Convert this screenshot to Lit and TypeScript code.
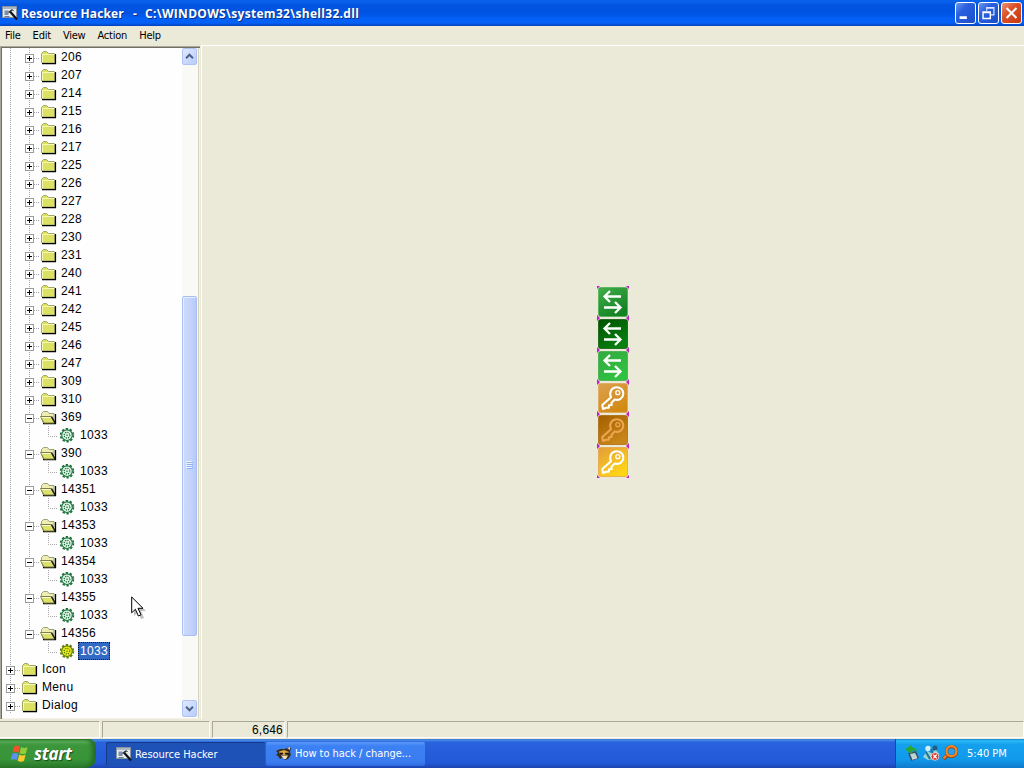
import { LitElement, css, html, svg } from 'lit'
import { customElement, property } from 'lit/decorators.js'
import { classMap } from 'lit/directives/class-map.js'
import { when } from 'lit/directives/when.js'

type Row = { label: string; depth: number; open?: boolean; selected?: boolean; last?: boolean }

const closed = [
  '206', '207', '214', '215', '216', '217', '225', '226', '227', '228',
  '230', '231', '240', '241', '242', '245', '246', '247', '309', '310',
]
const opened = ['369', '390', '14351', '14353', '14354', '14355', '14356']

const rows: Row[] = [
  ...closed.map(label => ({ label, depth: 1 })),
  ...opened.flatMap(label => [
    { label, depth: 1, open: true, last: label === '14356' },
    { label: '1033', depth: 2, selected: label === '14356', last: label === '14356' },
  ]),
  ...['Icon', 'Menu', 'Dialog'].map(label => ({ label, depth: 0 })),
]

const appIcon = html`
  <svg width="16" height="16" viewBox="0 0 16 16">
    <path d="M.5 1.500h14v11H.5z" fill="#e6ebee" stroke="#8a949c" />
    <path d="M1 2h13v2H1z" fill="#aab8c8" />
    <path d="M2.500 5.500h4v4.500h-4z" fill="#7890b0" />
    <path d="M8 5.500h4M2.500 11.500h5" stroke="#6c7c90" />
    <path d="M8 6.500l7 8" stroke="#111" stroke-width="2.200" />
    <path d="M6.500 7.500l4-3" stroke="#333" stroke-width="1.500" />
  </svg>
`

@customElement('tree-row')
export class TreeRow extends LitElement {

  @property({ type: Object })
  row: Row = { label: '', depth: 0 }

  private line(d: string) {
    return svg`<path d=${d} stroke="#a5a5a5" stroke-dasharray="1 1" fill="none" />`
  }

  private expander() {
    const { open, last } = this.row
    return html`
      <svg class="cell" viewBox="0 0 19 18">
        ${this.line(`M9.500 0V${last ? 9 : 18}`)}
        ${this.line('M14 10.500H19')}
        <rect x="5.500" y="6.500" width="8" height="8" fill="#fff" stroke="#9a9a9a" />
        <path d="M7 10.500H12" stroke="#000" />
        ${open ? null : svg`<path d="M9.500 8V13" stroke="#000" />`}
      </svg>
    `
  }

  private folder() {
    return html`
      <svg class="cell" viewBox="0 0 19 18">
        ${this.row.open
          ? svg`
            <path d="M2.500 9V5.500l2-2h4l1.500 2h5v9H4z" fill="#eceeb4" stroke="#a0a178" />
            <path d="M16.500 6v10M4 15.700h13" stroke="#000" stroke-width="1.300" />
            <path d="M1.500 8.500h10.500l3.500 6.500H5z" fill="#dce16a" stroke="#808044" />
            <path d="M2.500 9.500h9" stroke="#fbfce0" />
            <path d="M12.500 8.500l3.700 6.500" stroke="#111" stroke-width="1.300" />`
          : svg`
            <path d="M2.500 14.500V5.500l2-2h3l2 2h6v9.500H3z" fill="#dbe163" stroke="#a3a468" />
            <path d="M3.500 14V6.500h12" stroke="#f6f8bc" fill="none" />
            <path d="M16.500 6v10M3 15.600h14" stroke="#000" stroke-width="1.200" fill="none" />`}
      </svg>
    `
  }

  private gear() {
    const fill = this.row.selected ? '#e8ee18' : '#e4f5e8'
    const ink = this.row.selected ? '#5f7a08' : '#177038'
    return html`
      <svg class="cell" viewBox="0 0 19 18">
        <circle cx="9" cy="9.200" r="5.700" fill=${fill} />
        <circle cx="9" cy="9.200" r="6.400" fill="none" stroke=${ink} stroke-width="1.700" stroke-dasharray="2.300 1.721" />
        <circle cx="9" cy="9.200" r="5.300" fill="none" stroke=${ink} stroke-width="1.100" />
        <circle cx="9" cy="9.200" r="2.800" fill="none" stroke=${ink} stroke-width="1.300" stroke-dasharray="1.200 1" />
        <circle cx="9" cy="9.200" r=".8" fill=${ink} />
      </svg>
    `
  }

  render() {
    const { label, depth, selected, last } = this.row
    return html`
      ${when(depth > 0, () => html`<svg class="cell" viewBox="0 0 19 18">${this.line('M9.500 0V18')}</svg>`)}
      ${when(depth === 2, () => html`
        <svg class="cell" viewBox="0 0 19 18">${last ? null : this.line('M9.500 0V18')}</svg>
        <svg class="cell" viewBox="0 0 19 18">${this.line('M9.500 0V10.500H19')}</svg>
        ${this.gear()}
      `)}
      ${when(depth < 2, () => html`${this.expander()}${this.folder()}`)}
      <span class=${classMap({ label: true, selected: !!selected })}>${label}</span>
    `
  }

  static styles = css`
    :host {
      display: flex;
      height: 18px;
    }
    .cell {
      width: 19px;
      height: 18px;
      flex: none;
    }
    .label {
      box-sizing: border-box;
      margin-left: 1px;
      padding: 0 1px 0 2px;
      font: 12px/18px "Liberation Sans", sans-serif;
      letter-spacing: 0.35px;
      color: #000;
    }
    .selected {
      padding: 0 1px;
      line-height: 16px;
      color: #fff;
      background: #316ac5;
      border: 1px dotted #101828;
    }
  `
}

const strip = [
  { kind: 'arrows', ink: '#fff', from: '#42ae4a', to: '#128221' },
  { kind: 'arrows', ink: '#fff', from: '#005200', to: '#088010' },
  { kind: 'arrows', ink: '#fff', from: '#34a840', to: '#2fc240' },
  { kind: 'key', ink: '#fff', from: '#dda150', to: '#d18a12' },
  { kind: 'key', ink: '#eda552', from: '#a35f00', to: '#c98618' },
  { kind: 'key', ink: '#fff', from: '#e39c3c', to: '#ffd515' },
]

@customElement('bitmap-strip')
export class BitmapStrip extends LitElement {

  private glyph(kind: string, ink: string) {
    if (kind === 'arrows') {
      return svg`<path d="M24 10.500H8M13 5l-5.500 5.500L13 16M7 21.500h16M18 16l5.500 5.500L18 27" fill="none" stroke=${ink} stroke-width="2.300" />`
    }
    return svg`
      <path d="M14 15.200C11.800 10 14.800 5.200 19.500 5.200c4.500 0 7 3.300 6.800 6.800-.3 4.200-4.200 6.800-8.600 5.600l-3.200 3.200.2 2.200-2.700.3-.2 2.300-2.600.2-3.200 1.200-.7-4z" fill="none" stroke=${ink} stroke-width="2.100" stroke-linejoin="round" />
      <circle cx="20.800" cy="10.700" r="2" fill="none" stroke=${ink} stroke-width="1.300" />
    `
  }

  render() {
    return strip.map(({ kind, ink, from, to }, i) => html`
      <svg class="tile" viewBox="0 0 32 32">
        <linearGradient id=${`g${i}`} x1="0" y1="0" x2="0.600" y2="1">
          <stop offset="0" stop-color=${from} />
          <stop offset="1" stop-color=${to} />
        </linearGradient>
        <rect x="1" y="1" width="30" height="30" rx="2.500" fill="#f7f5e6" />
        <path d="M0 0h3L0 3zM32 0v3L29 0zM0 32v-3L3 32zM32 32h-3l3-3z" fill="#c01fc4" />
        <rect x="1.500" y="1.500" width="29" height="29" rx="2" fill=${`url(#g${i})`} stroke=${from} stroke-opacity="0.700" />
        ${this.glyph(kind, ink)}
      </svg>
    `)
  }

  static styles = css`
    :host {
      display: flex;
      flex-direction: column;
    }
    .tile {
      display: block;
      width: 32px;
      height: 32px;
    }
  `
}

@customElement('app-root')
export class AppRoot extends LitElement {

  render() {
    return html`
      <header class="title">
        ${appIcon}
        <span class="name">Resource Hacker</span>
        <span class="dash">-</span>
        <span class="path">C:\\WINDOWS\\system32\\shell32.dll</span>
        <div class="buttons">
          <svg class="min" viewBox="0 0 21 21"><path d="M4 15.500h8" stroke="#fff" stroke-width="3" /></svg>
          <svg class="max" viewBox="0 0 21 21">
            <path d="M8.500 8V4.500h8v8H13M8 5.200h9" fill="none" stroke="#dbe6ff" stroke-width="1.300" />
            <path d="M4.500 9.500h8v7h-8zM4 10h9" fill="none" stroke="#fff" stroke-width="1.600" />
          </svg>
          <svg class="close" viewBox="0 0 21 21"><path d="M5 5l11 11M16 5L5 16" stroke="#fff" stroke-width="2.300" /></svg>
        </div>
      </header>
      <nav class="menu">
        <span>File</span><span>Edit</span><span>View</span><span>Action</span><span>Help</span>
      </nav>
      <main>
        <section class="tree">
          <div class="rows">${rows.map(row => html`<tree-row .row=${row}></tree-row>`)}</div>
          <div class="scroll">
            <svg class="arrow" viewBox="0 0 15 17"><path d="M3.500 10.500l4-4 4 4" fill="none" stroke="#4d6185" stroke-width="2.300" /></svg>
            <div class="thumb"><i></i><i></i><i></i><i></i></div>
            <svg class="arrow down" viewBox="0 0 15 17"><path d="M3.500 6.500l4 4 4-4" fill="none" stroke="#4d6185" stroke-width="2.300" /></svg>
          </div>
        </section>
        <section class="canvas"><bitmap-strip></bitmap-strip></section>
      </main>
      <div class="status">
        <div class="panel p1"></div><div class="panel p2"></div>
        <div class="panel p3">6,646</div><div class="panel p4"></div>
      </div>
      <footer class="taskbar">
        <div class="start">
          <svg width="20" height="19" viewBox="0 0 20 19">
            <path d="M4 2.500c2-1.500 4-1.300 6 0L8.500 8.700c-2-1.200-4-1.200-6 0z" fill="#ee5426" />
            <path d="M11 3c2 1.200 4.300 1.200 6.500 0L16 9.200c-2.200 1.200-4.300 1.200-6.500 0z" fill="#8fce3b" />
            <path d="M2.200 10c2-1.300 4-1.200 6 0l-1.500 6.200c-2-1.200-4-1.200-6 0z" fill="#5b93f0" />
            <path d="M9.200 10.600c2 1.200 4.200 1.200 6.400 0l-1.500 6.200c-2.200 1.200-4.400 1.200-6.400 0z" fill="#fbca2c" />
          </svg>
          <span>start</span>
        </div>
        <div class="task active">${appIcon}<span>Resource Hacker</span></div>
        <div class="task">
          <svg width="16" height="16" viewBox="0 0 16 16">
            <path d="M0 5l4-2 5 0 4-2 2 1-1 4 1 3-3 4-3 1-2-3-3 2-2-3-2-1 2-2z" fill="#352e20" />
            <path d="M3 5.500l5-1.500 5 2-1 2-4 1-4-1z" fill="#d9a843" />
            <path d="M5 9.500h7l-2 3.500H8z" fill="#f3ddb0" />
            <path d="M4 7.500h3M9 7.500h4" stroke="#111" stroke-width="1.500" />
            <path d="M11 2l3-1v3z" fill="#d8d4c8" />
          </svg>
          <span>How to hack / change...</span>
        </div>
        <div class="tray">
          <svg width="16" height="16" viewBox="0 0 16 16">
            <path d="M3 8l8-2 3 7-8 3z" fill="#3a5368" />
            <path d="M5 9l5-1 2 4-5 1.500z" fill="#b9d5d5" />
            <path d="M7 14l5-1.500" stroke="#d7dfe0" stroke-width="1.500" />
            <path d="M0 4.500L6 0l1 2.500c3 0 5 1.500 5 4-2-1.500-4-1-5-.5l.7 3z" fill="#2aa82d" />
          </svg>
          <svg width="17" height="16" viewBox="0 0 17 16">
            <circle cx="5" cy="3.500" r="2.700" fill="#d5eff0" />
            <circle cx="12" cy="3" r="2.500" fill="#255c80" />
            <path d="M0 12l4-6 4 2 5-3 3 4-5 5-6 1z" fill="#9bd4d0" />
            <path d="M3 7l4 7M8 4l2 5" stroke="#267394" stroke-width="2" />
            <circle cx="12" cy="11.500" r="3.800" fill="#d92c20" stroke="#fff0e8" stroke-width=".7" />
            <path d="M10.300 9.800l3.400 3.400M13.700 9.800l-3.400 3.400" stroke="#fff" stroke-width="1.300" />
          </svg>
          <svg width="17" height="16" viewBox="0 0 17 16">
            <path d="M6 9.500L1.500 14" stroke="#8d3c0c" stroke-width="3.800" />
            <path d="M6 9L1.500 13.500" stroke="#f38227" stroke-width="2.300" />
            <circle cx="9.500" cy="6.500" r="5" fill="#22a2ef" stroke="#9a4312" stroke-width="3.300" />
            <circle cx="9.500" cy="6.200" r="5" fill="none" stroke="#f58a2a" stroke-width="2.200" />
          </svg>
          <span class="clock">5:40 PM</span>
        </div>
      </footer>
      <svg class="cursor" viewBox="0 0 16 24">
        <path d="M3 3v17l4-4 3 7 3-1-3-7h5z" fill="#000" opacity=".25" />
        <path d="M.7 1v15.800l3.700-3.500 3 6.700 2.600-1.200-3-6.500h5z" fill="#fff" stroke="#000" />
      </svg>
    `
  }

  static styles = css`
    :host {
      display: flex;
      flex-direction: column;
      position: relative;
      width: 1024px;
      height: 768px;
      overflow: hidden;
      background: #ebe9d8;
      font: 11px "DejaVu Sans Condensed", "DejaVu Sans", sans-serif;
      font-stretch: condensed;
      color: #000;
    }
    svg {
      display: block;
      flex: none;
    }
    span {
      white-space: nowrap;
    }

    .title {
      display: flex;
      align-items: center;
      box-sizing: border-box;
      height: 26px;
      padding: 0 2px;
      background: linear-gradient(#0a62ea 0, #0a5fea 2px, #0054e0 5px, #0054e3 13px, #0361fa 20px, #0360f5 23px, #0040c0 26px);
      color: #fff;
      font: bold 12px "Open Sans", sans-serif;
      text-shadow: 1px 1px 0 #0a2f80;
    }
    .name {
      width: 103px;
      margin-left: 3px;
      letter-spacing: 0.15px;
    }
    .dash {
      width: 12px;
      margin-left: 9px;
    }
    .path {
      letter-spacing: 0.3px;
    }
    .buttons {
      display: flex;
      gap: 2px;
      margin-left: auto;
    }
    .buttons svg {
      box-sizing: border-box;
      width: 21px;
      height: 22px;
      border: 1px solid #fff;
      border-radius: 3px;
      background: linear-gradient(135deg, #6c98f0, #2a60df 35%, #1c4dc8);
    }
    .buttons .close {
      background: linear-gradient(135deg, #eb9275, #dc5129 40%, #c53a10);
    }

    .menu {
      display: flex;
      box-sizing: border-box;
      height: 19px;
      padding: 0 5px;
      gap: 12px;
      line-height: 19px;
      letter-spacing: -0.22px;
    }

    main {
      display: flex;
      height: 674px;
    }
    .tree {
      display: flex;
      box-sizing: border-box;
      width: 200px;
      height: 673px;
      margin-top: 1px;
      padding: 2px 2px 0 1px;
      background: #fefefe;
      box-shadow: inset 1px 1px #aca899, inset 2px 2px #716f64, inset -1px -1px #f5f3e8, inset -2px -1px #d5d2c2;
    }
    .rows {
      flex: 1;
      height: 670px;
      overflow: hidden;
    }
    .scroll {
      display: flex;
      flex-direction: column;
      width: 16px;
      height: 669px;
      background: #f9f9f5;
    }
    .arrow {
      box-sizing: border-box;
      width: 15px;
      height: 17px;
      border: 1px solid #b0c3f5;
      border-radius: 2px;
      background: linear-gradient(135deg, #e0e9ff, #b9cbfa);
    }
    .down {
      margin-top: auto;
    }
    .thumb {
      display: flex;
      flex-direction: column;
      align-items: center;
      justify-content: center;
      gap: 1px;
      box-sizing: border-box;
      width: 15px;
      height: 340px;
      margin-top: 231px;
      padding: 0 1px 3px 0;
      border: 1px solid #a9bef2;
      border-radius: 2px;
      background: linear-gradient(90deg, #cbdafe, #c4d3fd 60%, #b5c8f8);
      box-shadow: inset 1px 1px #e7eeff;
    }
    .thumb i {
      width: 6px;
      height: 1px;
      background: #eef4fe;
      box-shadow: 1px 1px #8cb0f8;
    }
    .canvas {
      flex: 1;
      box-sizing: border-box;
      margin-left: 1px;
      padding: 240px 0 0 395px;
      border-left: 1px solid #fff;
      border-top: 1px solid #fff;
    }

    .status {
      display: flex;
      gap: 2px;
      height: 20px;
      box-sizing: border-box;
      padding-top: 2px;
    }
    .panel {
      box-sizing: border-box;
      height: 17px;
      border: 1px solid #aca899;
      border-right-color: #fff;
      border-bottom-color: #fff;
      font: 12px/16px "Liberation Sans", sans-serif;
      text-align: right;
    }
    .p1 { width: 100px; border-left: none; }
    .p2 { width: 108px; }
    .p3 { width: 73px; padding-right: 1px; letter-spacing: 0.2px; }
    .p4 { flex: 1; }

    .taskbar {
      display: flex;
      height: 29px;
      background: linear-gradient(#3168d5 0, #4993e6 1px, #2a63dc 3px, #245edb 12px, #2359d6 24px, #1c44b0 29px);
      color: #fff;
    }
    .start {
      display: flex;
      align-items: center;
      box-sizing: border-box;
      width: 96px;
      height: 29px;
      padding-left: 10px;
      margin-right: 10px;
      border-radius: 0 8px 10px 0;
      background: linear-gradient(#2a7a2c 0, #5cb05c 2px, #3c963c 6px, #389538 20px, #2b7a2b 29px);
      box-shadow: inset -4px 0 4px #256d25;
    }
    .start span {
      margin-left: 4px;
      font: italic bold 17px/20px "Open Sans", sans-serif;
      letter-spacing: -0.3px;
      text-shadow: 1px 1px 1px #1c4a1c;
    }
    .task {
      display: flex;
      align-items: center;
      box-sizing: border-box;
      width: 159px;
      height: 24px;
      margin: 3px 1px 0 0;
      padding: 0 0 1px 10px;
      border-radius: 2px;
      background: linear-gradient(#5a98fa, #3c81f3 4px, #3a7cf0 20px, #2e68da);
    }
    .task span {
      margin-left: 3px;
      letter-spacing: -0.03px;
    }
    .active {
      padding: 0 0 0 10px;
      background: #1e52b7;
      box-shadow: inset 1px 1px #143a8c;
    }
    .tray {
      display: flex;
      align-items: center;
      box-sizing: border-box;
      width: 129px;
      margin-left: auto;
      padding: 0 0 1px 9px;
      gap: 2px;
      border-left: 1px solid #0c4da8;
      background: linear-gradient(#1686dc 0, #2cbcf5 2px, #15a0ee 5px, #119aec 20px, #0e79cc 29px);
    }
    .clock {
      margin-left: 6px;
    }
    .cursor {
      position: absolute;
      left: 131px;
      top: 596px;
      width: 16px;
      height: 24px;
    }
  `
}

declare global {
  interface HTMLElementTagNameMap {
    'app-root': AppRoot
    'tree-row': TreeRow
    'bitmap-strip': BitmapStrip
  }
}
